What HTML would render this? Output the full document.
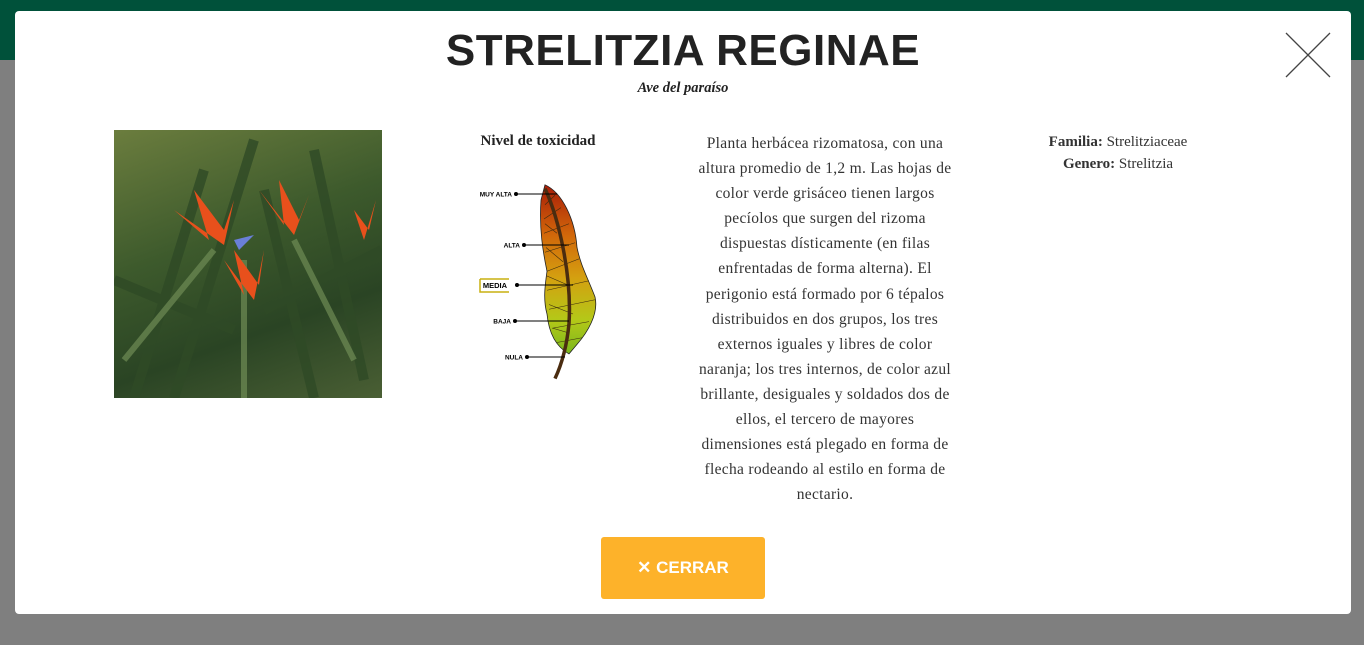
<!DOCTYPE html>
<html><head><meta charset="utf-8"><style>
body{margin:0;width:1364px;height:645px;overflow:hidden;background:#7f7f7f;font-family:"Liberation Serif",serif;position:relative}
.top{position:absolute;left:0;top:0;width:1364px;height:60px;background:#00513a}
.modal{position:absolute;left:15px;top:11px;width:1336px;height:603px;background:#fff;border-radius:4px}
h1{position:absolute;left:0;width:1336px;top:15px;margin:0;text-align:center;font-family:"Liberation Sans",sans-serif;font-weight:900;font-size:44px;letter-spacing:0.5px;color:#222}
.sub{position:absolute;left:0;width:1336px;top:69px;text-align:center;font-style:italic;font-weight:bold;font-size:14.5px;color:#222}
.photo{position:absolute;left:99px;top:119px;width:268px;height:268px;background:linear-gradient(160deg,#6b7d3e,#3d5a2c 40%,#2a4424 70%,#4a5f34);overflow:hidden}
.tox{position:absolute;left:440px;top:122px;width:166px;text-align:center;font-weight:bold;font-size:15px;color:#222}
.desc{position:absolute;left:630px;top:120px;width:360px;text-align:center;font-size:15.5px;line-height:25.1px;color:#333;white-space:nowrap;letter-spacing:0.3px}
.fam{position:absolute;left:995px;top:120px;width:216px;text-align:center;font-size:15px;line-height:22px;color:#333}
.btn{position:absolute;left:586px;top:526px;width:164px;height:62px;background:#fdb22a;border-radius:3px;color:#fff;font-family:"Liberation Sans",sans-serif;font-weight:bold;font-size:17px;line-height:62px;text-align:center}
</style></head><body>
<div class="top"></div>
<div class="modal">
<h1>STRELITZIA REGINAE</h1>
<div class="sub">Ave del paraíso</div>
<svg style="position:absolute;left:1270px;top:21px" width="46" height="46"><path d="M1 1L45 45M45 1L1 45" stroke="#444" stroke-width="1.3"/></svg>
<div class="photo"><svg width="268" height="268">
<g stroke="#2f4a26" stroke-width="10" opacity=".8"><path d="M20 268L90 40M60 268L140 10M200 268L150 60M250 250L200 20M0 150L120 200M268 120L150 180"/></g>
<g stroke="#6f8c55" stroke-width="6" opacity=".7"><path d="M10 230L100 120M240 230L180 110M130 268L130 130"/></g>
<g fill="#e8501c"><path d="M60 80L95 110L80 60L110 100L120 70L110 115Z"/><path d="M145 60L170 95L165 50L185 90L195 65L180 105Z"/><path d="M110 130L130 165L120 120L145 155L150 120L140 170Z"/><path d="M240 80L255 100L262 70L250 110Z"/></g>
<path d="M120 110L140 105L125 120Z" fill="#6a7fd8"/>
</svg></div>
<div class="tox">Nivel de toxicidad</div>
<svg style="position:absolute;left:462px;top:148px" width="130" height="235" font-family="Liberation Sans" font-weight="bold" font-size="6.5">
<defs><linearGradient id="g" x1="0" y1="0" x2="0" y2="1"><stop offset="0" stop-color="#a81c08"/><stop offset=".3" stop-color="#d2680a"/><stop offset=".55" stop-color="#d4a010"/><stop offset=".8" stop-color="#b4c818"/><stop offset="1" stop-color="#7ab81c"/></linearGradient></defs>
<g transform="translate(0,22) scale(1,0.95)">
<path d="M68 4C85 12 98 40 100 70C104 90 110 100 118 122C122 140 110 160 100 172L92 182C80 175 72 162 70 140C66 125 68 110 70 95C66 75 62 50 64 20Z" fill="url(#g)" stroke="#222" stroke-width=".8"/>
<g stroke="#3a2a10" stroke-width=".6" fill="none"><path d="M68 25L78 15M67 40L84 28M67 55L92 45M68 75L98 65M70 95L102 82M70 115L112 105M72 135L118 125M75 155L112 148M80 170L105 165M68 45L80 55M69 70L86 85M70 100L92 110M72 130L96 140M76 155L92 160"/></g>
<path d="M68 8C82 40 95 100 92 150C90 172 86 190 78 208" stroke="#4a2c10" stroke-width="3.5" fill="none"/>
</g>
<g stroke="#000" stroke-width="1"><path d="M39 35H80M47 86H92M40 126H96M38 162H92M50 198H88"/></g>
<g fill="#000" text-anchor="end"><circle cx="39" cy="35" r="2"/><circle cx="47" cy="86" r="2"/><circle cx="40" cy="126" r="2"/><circle cx="38" cy="162" r="2"/><circle cx="50" cy="198" r="2"/>
<text x="35" y="37.5">MUY ALTA</text><text x="43" y="88.5">ALTA</text><text x="30" y="129" font-size="7.5">MEDIA</text><text x="34" y="164.5">BAJA</text><text x="46" y="200.5">NULA</text></g>
<path d="M3 120H32M3 120V133H32" stroke="#c9b010" fill="none" stroke-width="1.5"/>
</svg>
<div class="desc">Planta herbácea rizomatosa, con una<br>altura promedio de 1,2 m. Las hojas de<br>color verde grisáceo tienen largos<br>pecíolos que surgen del rizoma<br>dispuestas dísticamente (en filas<br>enfrentadas de forma alterna). El<br>perigonio está formado por 6 tépalos<br>distribuidos en dos grupos, los tres<br>externos iguales y libres de color<br>naranja; los tres internos, de color azul<br>brillante, desiguales y soldados dos de<br>ellos, el tercero de mayores<br>dimensiones está plegado en forma de<br>flecha rodeando al estilo en forma de<br>nectario.</div>
<div class="fam"><b>Familia:</b> Strelitziaceae<br><b>Genero:</b> Strelitzia</div>
<div class="btn">✕ CERRAR</div>
</div>
</body></html>
